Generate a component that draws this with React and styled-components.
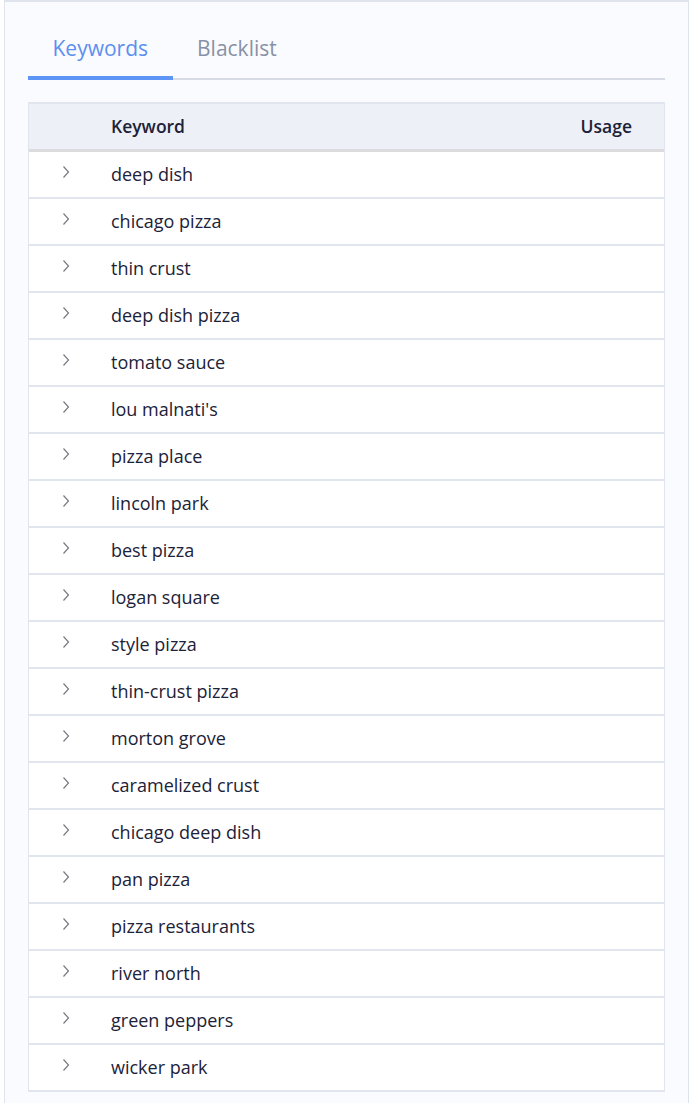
import React, { useState } from 'react';
import styled, { createGlobalStyle } from 'styled-components';

const keywords = [
  'deep dish',
  'chicago pizza',
  'thin crust',
  'deep dish pizza',
  'tomato sauce',
  "lou malnati's",
  'pizza place',
  'lincoln park',
  'best pizza',
  'logan square',
  'style pizza',
  'thin-crust pizza',
  'morton grove',
  'caramelized crust',
  'chicago deep dish',
  'pan pizza',
  'pizza restaurants',
  'river north',
  'green peppers',
  'wicker park',
];

const GlobalStyle = createGlobalStyle`
  body {
    margin: 0;
    background: #ffffff;
    font-family: "Open Sans", "Liberation Sans", sans-serif;
  }
`;

const Panel = styled.div`
  margin-left: 4px;
  width: 685px;
  min-height: 1120px;
  border: 1px solid #dfe3ec;
  border-top-width: 2px;
  background-color: #fafbfe;
  padding: 0 22px 0 23px;
  box-sizing: border-box;
`;

const TabBar = styled.div`
  display: flex;
  margin-top: 27px;
  width: 637px;
  border-bottom: 2px solid #d7dbe6;
`;

const Tab = styled.button`
  position: relative;
  padding: 5px 24.5px 16px;
  border: none;
  background: none;
  font-family: inherit;
  font-size: 21px;
  color: ${({ active }) => (active ? '#5c8ff0' : '#8891a5')};
  cursor: pointer;
  &::after {
    content: '';
    position: absolute;
    left: 0;
    right: 0;
    bottom: -2px;
    height: 4px;
    background: ${({ active }) => (active ? '#5c95f5' : 'transparent')};
  }
`;

const Table = styled.div`
  margin-top: 22px;
  width: 637px;
  box-sizing: border-box;
  border: 1px solid #e1e5ee;
  border-top-width: 2px;
  border-bottom: none;
  background: #ffffff;
`;

const HeaderRow = styled.div`
  display: flex;
  align-items: center;
  height: 45px;
  background-color: #eef0f7;
  border-bottom: 3px solid #dcdcdf;
  font-size: 17.5px;
  font-weight: 600;
  color: #1c2238;
`;

const Row = styled.div`
  display: flex;
  align-items: center;
  height: 45px;
  border-bottom: 2px solid #e1e5ee;
  font-size: 18px;
  color: #1c2238;
`;

const ToggleCell = styled.div`
  width: 82px;
  display: flex;
  justify-content: flex-start;
  padding-left: 33px;
  box-sizing: border-box;
  margin-top: -6px;
`;

const KeywordCell = styled.div`
  flex: 1;
  margin-bottom: 2px;
`;

const UsageCell = styled.div`
  padding-right: 32px;
  margin-bottom: 2px;
`;

const Chevron = () => (
  <svg width="8" height="14" viewBox="0 0 8 14">
    <polyline
      points="1.5,1.5 6.5,7 1.5,12.5"
      fill="none"
      stroke="#777a80"
      strokeWidth="1.2"
    />
  </svg>
);

const App = () => {
  const [tab, setTab] = useState('keywords');
  return (
    <>
      <GlobalStyle />
      <Panel>
        <TabBar>
          <Tab active={tab === 'keywords'} onClick={() => setTab('keywords')}>
            Keywords
          </Tab>
          <Tab active={tab === 'blacklist'} onClick={() => setTab('blacklist')}>
            Blacklist
          </Tab>
        </TabBar>
        <Table>
          <HeaderRow>
            <ToggleCell />
            <KeywordCell>Keyword</KeywordCell>
            <UsageCell>Usage</UsageCell>
          </HeaderRow>
          {keywords.map(k => (
            <Row key={k}>
              <ToggleCell>
                <Chevron />
              </ToggleCell>
              <KeywordCell>{k}</KeywordCell>
            </Row>
          ))}
        </Table>
      </Panel>
    </>
  );
};

export default App;
